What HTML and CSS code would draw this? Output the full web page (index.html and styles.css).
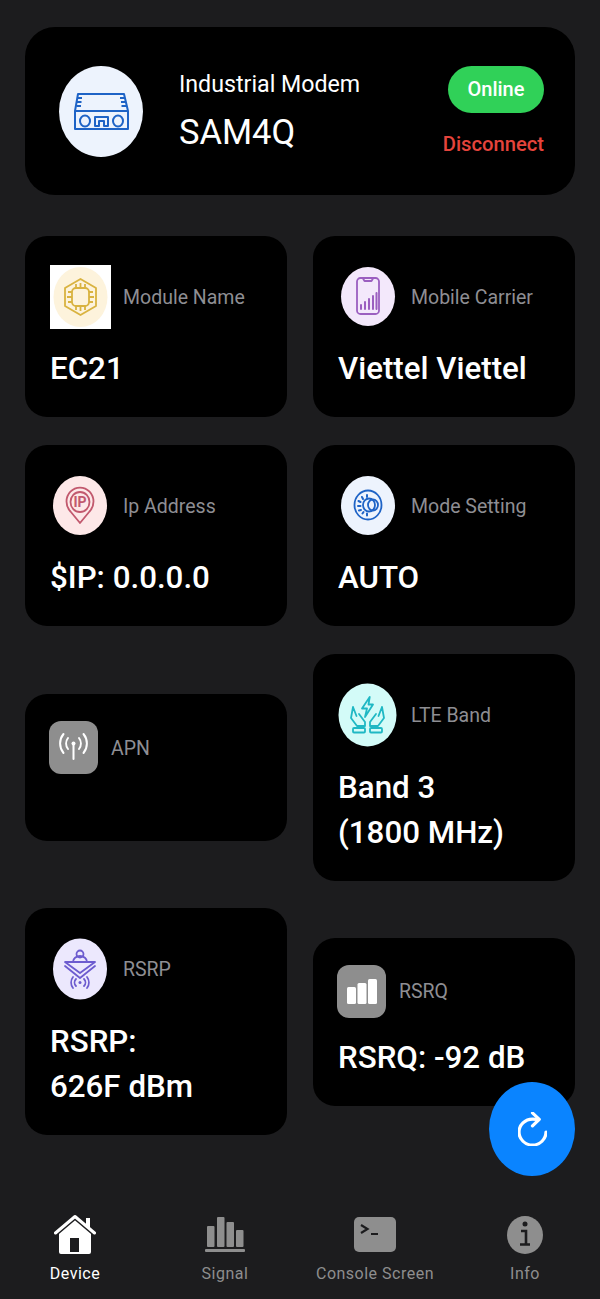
FILE: index.html
```html
<!DOCTYPE html>
<html lang="en">
<head>
<meta charset="utf-8">
<title>Device</title>
<link rel="stylesheet" href="styles.css">
</head>
<body>
<div class="app">
  <main class="main">
    <section class="header">
      <svg class="header-icon" viewBox="0 0 84 91">
        <ellipse cx="42" cy="45.5" rx="42" ry="45.5" fill="#edf3fd"/>
        <g fill="none" stroke="#1e63c6" stroke-width="2" stroke-linejoin="round">
          <path d="M19 28H65L69 45V63H16V45Z"/>
          <path d="M16 45H69"/>
          <path d="M18.500 32H23M18 36H22.500M17.500 40H22M61 32H66M62 36H67M62.500 40H68"/>
          <ellipse cx="26" cy="55" rx="5" ry="5.500"/>
          <ellipse cx="59" cy="55" rx="5" ry="5.500"/>
          <path d="M36 60V51H49V60H45V55H40V60Z"/>
        </g>
      </svg>
      <div class="header-text">
        <div class="header-kind">Industrial Modem</div>
        <div class="header-name">SAM4Q</div>
      </div>
      <div class="header-actions">
        <div class="status">Online</div>
        <div class="disconnect">Disconnect</div>
      </div>
    </section>

    <div class="row row-first">
      <article class="card">
        <div class="card-head">
          <svg class="icon" viewBox="0 0 61 64">
            <rect width="61" height="64" fill="#fff"/>
            <ellipse cx="30.500" cy="32" rx="27" ry="30" fill="#fdf3dc"/>
            <g fill="none" stroke="#d9b340" stroke-width="1.800" stroke-linejoin="round">
              <path d="M30.500 14L46 23V41L30.500 50L15 41V23Z"/>
              <rect x="22" y="23" width="17" height="18" rx="4"/>
              <path d="M26 19V23M30.500 18V23M35 19V23M26 41V45M30.500 41V46M35 41V45M18 27H22M17 32H22M18 37H22M39 27H43M39 32H44M39 37H43"/>
            </g>
          </svg>
          <span class="label">Module Name</span>
        </div>
        <div class="value">EC21</div>
      </article>
      <article class="card">
        <div class="card-head">
          <svg class="icon" viewBox="0 0 61 64">
            <ellipse cx="30" cy="31.500" rx="27" ry="29.500" fill="#f3e8fb"/>
            <g fill="none" stroke="#9b5fc0" stroke-width="1.800" stroke-linejoin="round" stroke-linecap="round">
              <rect x="19" y="13" width="22" height="36" rx="3.500"/>
              <path d="M25 13.500L26.500 16H33.500L35 13.500"/>
              <path d="M23 40V44M27 37V44M31 34V44M35 31V44M38.500 28V44" stroke-width="2"/>
            </g>
          </svg>
          <span class="label">Mobile Carrier</span>
        </div>
        <div class="value">Viettel Viettel</div>
      </article>
    </div>

    <div class="row">
      <article class="card">
        <div class="card-head">
          <svg class="icon" viewBox="0 0 61 64">
            <ellipse cx="30" cy="31.500" rx="27" ry="29.500" fill="#fde8e8"/>
            <g fill="none" stroke="#c2596e" stroke-width="1.800" stroke-linejoin="round">
              <path d="M30 49L20.500 37.500A13.500 14 0 1 1 39.500 37.500Z"/>
              <ellipse cx="30" cy="28" rx="9.500" ry="10"/>
            </g>
            <text class="ip-text" x="30" y="33" text-anchor="middle">IP</text>
          </svg>
          <span class="label">Ip Address</span>
        </div>
        <div class="value">$IP: 0.0.0.0</div>
      </article>
      <article class="card">
        <div class="card-head">
          <svg class="icon" viewBox="0 0 61 64">
            <ellipse cx="30" cy="31.500" rx="27" ry="29.500" fill="#edf3fd"/>
            <g fill="none" stroke="#1e63c6" stroke-width="1.800" stroke-linecap="round">
              <ellipse cx="30" cy="31" rx="13.500" ry="14.500"/>
              <ellipse cx="31" cy="31" rx="6" ry="6.500"/>
              <ellipse cx="35" cy="31" rx="5" ry="5.500"/>
              <path d="M29 21V23M24 23L25 25M20.500 27L22.500 28M20 32H22.500M21 36.500L23 36M24.500 39.500L25.500 38M29 41.500V39.500" stroke-width="2"/>
            </g>
          </svg>
          <span class="label">Mode Setting</span>
        </div>
        <div class="value">AUTO</div>
      </article>
    </div>

    <div class="row">
      <article class="card card-small">
        <div class="card-head">
          <svg class="icon-square" viewBox="0 0 49 53">
            <rect width="49" height="53" rx="12" fill="#8e8e8e"/>
            <g fill="none" stroke="#fff" stroke-width="2" stroke-linecap="round">
              <path d="M24.500 23V38"/>
              <path d="M19 17A9 9 0 0 0 19 28M30 17A9 9 0 0 1 30 28"/>
              <path d="M14.500 13A15 15 0 0 0 14.500 32M34.500 13A15 15 0 0 1 34.500 32"/>
            </g>
            <circle cx="24.500" cy="22.500" r="2" fill="#fff"/>
          </svg>
          <span class="label">APN</span>
        </div>
        <div class="value value-empty"></div>
      </article>
      <article class="card card-tall">
        <div class="card-head">
          <svg class="icon" viewBox="0 0 61 64">
            <ellipse cx="29.500" cy="32" rx="29" ry="31.500" fill="#d3fbf8"/>
            <g fill="none" stroke="#1fb8c4" stroke-width="1.800" stroke-linejoin="round" stroke-linecap="round">
              <path d="M31.700 14L24 25.500H29L27 34L35 21.500H30.500Z"/>
              <path d="M15 24L13 35L19 43H27V39L21 31M15 24L18.500 33"/>
              <path d="M44 24L46 35L40 43H32V39L38 31M44 24L40.500 33"/>
              <rect x="15" y="45" width="12" height="4.500" rx="1"/>
              <rect x="32" y="45" width="12" height="4.500" rx="1"/>
            </g>
          </svg>
          <span class="label">LTE Band</span>
        </div>
        <div class="value">Band 3<br>(1800 MHz)</div>
      </article>
    </div>

    <div class="row row-last">
      <article class="card card-tall">
        <div class="card-head">
          <svg class="icon" viewBox="0 0 61 64">
            <ellipse cx="30" cy="32" rx="27" ry="30.500" fill="#ece8fd"/>
            <g fill="none" stroke="#6d5ccf" stroke-width="1.800" stroke-linecap="round" stroke-linejoin="round">
              <circle cx="30" cy="17" r="3.500"/>
              <path d="M23 25A7 6 0 0 1 37 25"/>
              <path d="M15 25H45L30 36Z"/>
              <path d="M15 29L30 41L45 29"/>
              <path d="M26 42A5 5 0 0 0 26 49M34 42A5 5 0 0 1 34 49M23 40A9 9 0 0 0 23 51M37 40A9 9 0 0 1 37 51"/>
            </g>
            <circle cx="30" cy="45.500" r="1.500" fill="#6d5ccf"/>
          </svg>
          <span class="label">RSRP</span>
        </div>
        <div class="value">RSRP:<br>626F dBm</div>
      </article>
      <article class="card card-small">
        <div class="card-head">
          <svg class="icon-square" viewBox="0 0 49 53">
            <rect width="49" height="53" rx="12" fill="#8e8e8e"/>
            <g fill="#fff">
              <rect x="10" y="22" width="9" height="17" rx="1.500"/>
              <rect x="20.500" y="18" width="9" height="21" rx="1.500"/>
              <rect x="31" y="14" width="9" height="25" rx="1.500"/>
            </g>
          </svg>
          <span class="label">RSRQ</span>
        </div>
        <div class="value">RSRQ: -92 dB</div>
      </article>
    </div>
  </main>

  <button class="fab" type="button" aria-label="Refresh">
    <svg class="fab-icon" viewBox="84 46 344 420" preserveAspectRatio="none">
      <path d="M320 146s24.360-12-64-12a160 160 0 10160 160" fill="none" stroke="#fff" stroke-width="38" stroke-linecap="round" stroke-miterlimit="10"/>
      <path d="M256 58l80 80-80 80" fill="none" stroke="#fff" stroke-width="38" stroke-linecap="round" stroke-linejoin="round"/>
    </svg>
  </button>

  <nav class="tabbar">
    <div class="tab tab-active">
      <svg class="tab-icon" viewBox="0 0 42 40">
        <path fill="#fff" fill-rule="evenodd" d="M5 15.500L21 3L37 15.500V38A2 2 0 0 1 35 40H7A2 2 0 0 1 5 38ZM16 24V38H25V24Z"/>
        <path d="M1.500 19L21 2.500L40.500 19" fill="none" stroke="#1c1c1e" stroke-width="6"/>
        <path d="M1.500 19L21 2.500L40.500 19" fill="none" stroke="#fff" stroke-width="3" stroke-linecap="round" stroke-linejoin="round"/>
        <rect x="32" y="4" width="4" height="10" fill="#fff"/>
      </svg>
      <span class="tab-label">Device</span>
    </div>
    <div class="tab">
      <svg class="tab-icon" viewBox="0 0 42 40">
        <g fill="#8e8e8e">
          <rect x="3" y="12" width="7.500" height="21" rx="1"/>
          <rect x="13" y="3" width="7.500" height="30" rx="1"/>
          <rect x="22.500" y="8" width="7.500" height="25" rx="1"/>
          <rect x="32" y="16" width="7.500" height="17" rx="1"/>
          <rect x="1" y="35" width="40" height="3" rx="1"/>
        </g>
      </svg>
      <span class="tab-label">Signal</span>
    </div>
    <div class="tab">
      <svg class="tab-icon" viewBox="0 0 42 40">
        <rect x="0" y="3" width="42" height="35" rx="5" fill="#8e8e8e"/>
        <path d="M7 11L13.500 15L7 19M17 20H24" fill="none" stroke="#1c1c1e" stroke-width="2.200"/>
      </svg>
      <span class="tab-label">Console Screen</span>
    </div>
    <div class="tab">
      <svg class="tab-icon" viewBox="0 0 42 40">
        <ellipse cx="21" cy="21" rx="18" ry="19" fill="#8e8e8e"/>
        <circle cx="21" cy="10" r="2.500" fill="#1c1c1e"/>
        <path d="M17 17H22V30M16 30.500H26" fill="none" stroke="#1c1c1e" stroke-width="2.600"/>
      </svg>
      <span class="tab-label">Info</span>
    </div>
  </nav>
</div>
</body>
</html>
```

FILE: styles.css
```css
* {
  box-sizing: border-box;
}

html,
body {
  margin: 0;
  padding: 0;
  background: #1c1c1e;
}

body {
  font-family: Roboto, "Liberation Sans", sans-serif;
  color: #fff;
}

.app {
  position: relative;
  display: flex;
  flex-direction: column;
  width: 600px;
  height: 1299px;
  overflow: hidden;
}

.main {
  flex: 1;
  display: flex;
  flex-direction: column;
  gap: 28px;
  padding: 27px 25px 0;
}

.header {
  display: flex;
  align-items: stretch;
  height: 168px;
  padding: 39px 31px 0 34px;
  margin-bottom: 13px;
  background: #000;
  border-radius: 30px;
}

.header-icon {
  flex: none;
  width: 84px;
  height: 91px;
}

.header-text {
  flex: 1;
  margin-left: 36px;
}

.header-kind {
  font-size: 23.200px;
  line-height: 36px;
}

.header-name {
  margin-top: 7px;
  font-size: 34.500px;
  line-height: 46px;
}

.header-actions {
  display: flex;
  flex-direction: column;
  align-items: flex-end;
}

.status {
  width: 96px;
  height: 47px;
  border-radius: 24px;
  background: #30d158;
  font-size: 20px;
  font-weight: 500;
  line-height: 47px;
  text-align: center;
}

.disconnect {
  margin-top: 17px;
  font-size: 20.200px;
  font-weight: 500;
  line-height: 28px;
  color: #e5443c;
}

.row {
  display: flex;
  align-items: center;
  gap: 26px;
}

.row-last {
  margin-top: -1px;
}

.card {
  flex: 1 1 0;
  padding: 29px 25px 26px;
  background: #000;
  border-radius: 22px;
}

.card-small {
  padding-top: 27px;
}

.card-small .card-head {
  gap: 13px;
}

.card-tall .value {
  margin-top: 18px;
}

.card-head {
  display: flex;
  align-items: center;
  gap: 12px;
}

.icon {
  flex: none;
  width: 61px;
  height: 64px;
}

.icon-square {
  flex: none;
  width: 49px;
  height: 53px;
  margin-left: -1px;
}

.label {
  margin-top: 2px;
  font-size: 19.500px;
  line-height: 28px;
  color: #8e8e93;
}

.value {
  margin-top: 17px;
  font-size: 31.300px;
  font-weight: 500;
  line-height: 45px;
  white-space: nowrap;
}

.value-empty {
  height: 24px;
}

.ip-text {
  font-family: Roboto, sans-serif;
  font-size: 14px;
  font-weight: 700;
  fill: #c2596e;
}

.fab {
  position: absolute;
  left: 489px;
  top: 1082px;
  display: flex;
  align-items: center;
  justify-content: center;
  width: 86px;
  height: 94px;
  padding: 0;
  border: 0;
  border-radius: 50%;
  background: #0a84ff;
}

.fab-icon {
  width: 29px;
  height: 34px;
}

.tabbar {
  display: flex;
  height: 85px;
}

.tab {
  flex: 1 1 0;
  display: flex;
  flex-direction: column;
  align-items: center;
  gap: 9px;
  color: #8e8e8e;
}

.tab-active {
  color: #fff;
}

.tab-icon {
  width: 42px;
  height: 40px;
}

.tab-label {
  font-size: 16px;
  line-height: 22px;
  letter-spacing: 0.500px;
}
```
